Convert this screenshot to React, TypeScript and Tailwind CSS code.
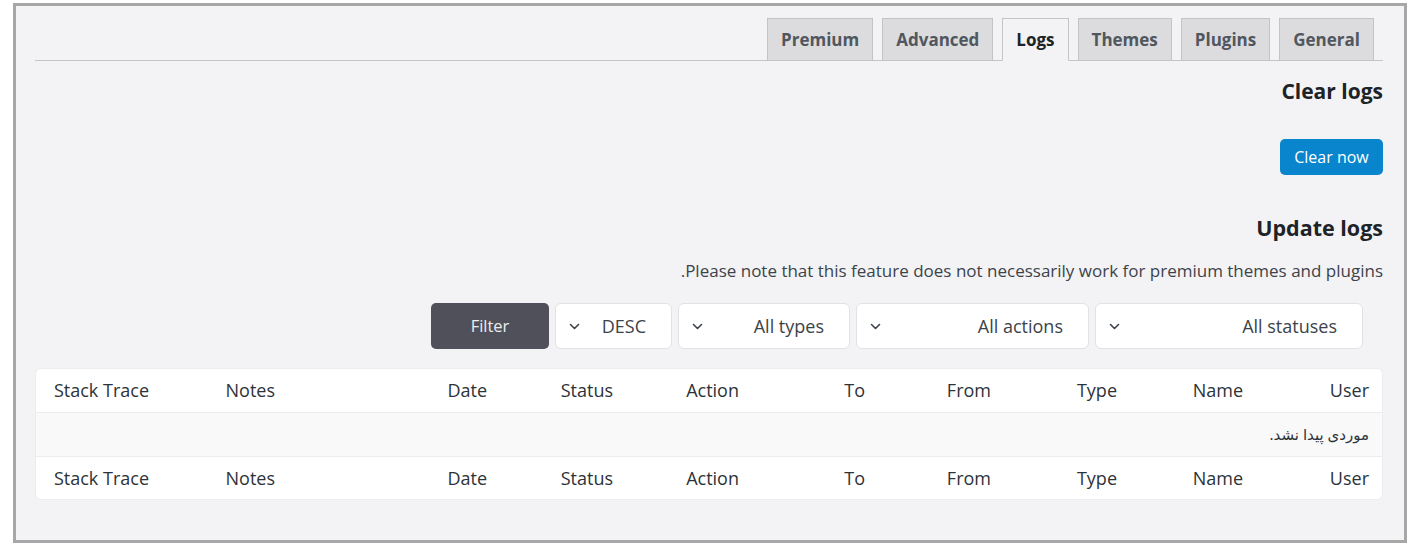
import { ReactNode } from 'react';

const tabs = ['General', 'Plugins', 'Themes', 'Logs', 'Advanced', 'Premium'];
const activeTab = 'Logs';

const columns = ['User', 'Name', 'Type', 'From', 'To', 'Action', 'Status', 'Date', 'Notes', 'Stack Trace'];

const filters = [
  { label: 'All statuses', width: 'w-[268px]' },
  { label: 'All actions', width: 'w-[233px]' },
  { label: 'All types', width: 'w-[172px]' },
  { label: 'DESC', width: 'w-[117px]' },
];

const heading = "font-['Open_Sans',sans-serif]";
const body = "font-['Open_Sans','Noto_Sans',sans-serif]";

function Chevron() {
  return (
    <svg width="11" height="7" viewBox="0 0 11 7" fill="none" className="shrink-0">
      <path d="M1.5 1.5 5.5 5.5 9.5 1.5" stroke="#3c434a" strokeWidth="1.6" strokeLinecap="round" strokeLinejoin="round" />
    </svg>
  );
}

function Row({ children, className = '' }: { children: ReactNode; className?: string }) {
  return (
    <div
      className={`grid grid-cols-[126px_126px_126px_126px_126px_126px_126px_212px_126px_1fr] items-center ${className}`}
    >
      {children}
    </div>
  );
}

function HeaderRow({ last }: { last?: boolean }) {
  return (
    <Row className={last ? 'h-[42px]' : 'h-[44px] border-b border-[#ececee]'}>
      {columns.map((c) => (
        <div key={c} className="px-[13px] text-[18px] text-[#2c3338]">
          {c}
        </div>
      ))}
    </Row>
  );
}

export default function App() {
  return (
    <div className="min-h-[546px] bg-white pl-[13px] pt-[3px]">
      <div
        dir="rtl"
        className={`h-[540px] w-[1394px] border-[3px] border-[#a7a7a7] bg-[#f3f3f5] pl-[19px] pr-[21px] pt-[12px] ${body}`}
      >
        {/* tab strip */}
        <nav className="flex h-[43px] items-end gap-[9px] border-b border-[#c3c4c7] pr-[9px]">
          {tabs.map((t) => {
            const active = t === activeTab;
            return (
              <div
                key={t}
                className={`-mb-px flex h-[43px] items-center border border-[#c3c4c7] px-[13px] text-[17px] font-bold ${heading} ${
                  active
                    ? 'border-b-[#f3f3f5] bg-[#f3f3f5] text-[#1d2327]'
                    : 'bg-[#dcdcde] text-[#50575e]'
                }`}
              >
                {t}
              </div>
            );
          })}
        </nav>

        <h2 className={`mt-[16px] text-[21px] leading-[28px] font-bold text-[#1d2327] ${heading}`}>Clear logs</h2>

        <div className="mt-[34px] flex">
          <button
            className={`h-[36px] w-[103px] rounded-[5px] bg-[#0885cc] text-[16px] text-white ${heading}`}
          >
            Clear now
          </button>
        </div>

        <h2 className="mt-[39px] text-[21.5px] leading-[28px] font-bold text-[#1d2327]">Update logs</h2>

        <p className="mt-[19px] text-[17px] leading-[20px] text-[#3c434a]">
          Please note that this feature does not necessarily work for premium themes and plugins.
        </p>

        {/* filter bar */}
        <div className="mt-[22px] flex h-[46px] gap-[6px] pr-[20px]">
          {filters.map((f) => (
            <div
              key={f.label}
              className={`flex h-[46px] items-center justify-between rounded-[6px] border border-[#e2e2e4] bg-white pl-[13px] pr-[25px] ${f.width}`}
            >
              <span className={`text-[18px] text-[#3c434a] ${heading}`}>{f.label}</span>
              <Chevron />
            </div>
          ))}
          <button
            className={`h-[46px] w-[118px] rounded-[5px] bg-[#50505a] text-[16.5px] text-[#ececee] ${heading}`}
          >
            Filter
          </button>
        </div>

        {/* log table */}
        <div className="mt-[19px] overflow-hidden rounded-[6px] border border-[#ececee] bg-white">
          <HeaderRow />
          <div className="flex h-[44px] items-center border-b border-[#ececee] bg-[#f9f9fa] px-[13px] text-[15px] text-[#2c3338] font-['Noto_Sans','DejaVu_Sans',sans-serif]">
            موردی پیدا نشد.
          </div>
          <HeaderRow last />
        </div>
      </div>
    </div>
  );
}
